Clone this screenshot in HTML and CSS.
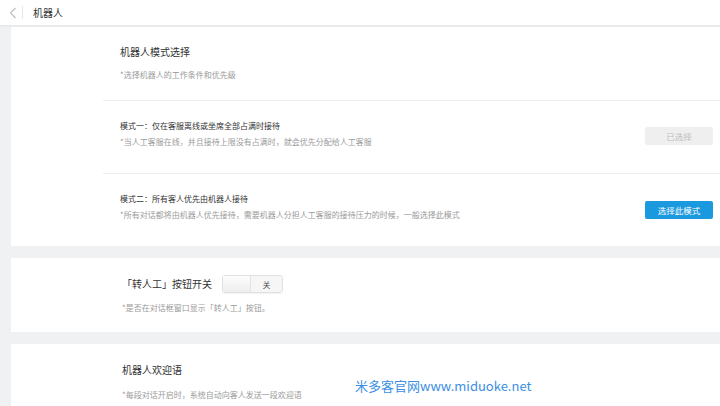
FILE: index.html
```html
<!DOCTYPE html>
<html lang="zh">
<head>
<meta charset="utf-8">
<link rel="stylesheet" href="styles.css">
</head>
<body>
<header class="topbar">
  <span class="back">
    <svg width="8" height="12" viewBox="0 0 8 12"><path d="M6.5 1 L1.5 6 L6.5 11" fill="none" stroke="#b8bcc2" stroke-width="1.1"/></svg>
  </span>
  <span class="sep"></span>
  <span class="page-title">机器人</span>
</header>
<main class="content">
  <section class="card card-mode">
    <div class="card-head">
      <h2 class="title">机器人模式选择</h2>
      <p class="hint">*选择机器人的工作条件和优先级</p>
    </div>
    <div class="mode-row">
      <div class="mode-text">
        <div class="mode-title">模式一：仅在客服离线或坐席全部占满时接待</div>
        <div class="hint">*当人工客服在线，并且接待上限没有占满时，就会优先分配给人工客服</div>
      </div>
      <button class="btn btn-disabled">已选择</button>
    </div>
    <div class="mode-row mode-row-2">
      <div class="mode-text">
        <div class="mode-title">模式二：所有客人优先由机器人接待</div>
        <div class="hint">*所有对话都将由机器人优先接待，需要机器人分担人工客服的接待压力的时候，一般选择此模式</div>
      </div>
      <button class="btn btn-primary">选择此模式</button>
    </div>
  </section>
  <section class="card card-switch">
    <div class="switch-line">
      <span class="title">「转人工」按钮开关</span>
      <span class="toggle"><span class="toggle-knob"></span><span class="toggle-label">关</span></span>
    </div>
    <p class="hint">*是否在对话框窗口显示「转人工」按钮。</p>
  </section>
  <section class="card card-welcome">
    <h2 class="title">机器人欢迎语</h2>
    <p class="hint">*每段对话开启时，系统自动向客人发送一段欢迎语</p>
  </section>
</main>
<div class="watermark">米多客官网www.miduoke.net</div>
</body>
</html>
```
FILE: styles.css
```css
* { box-sizing: border-box; }
html, body { margin: 0; padding: 0; }
body {
  width: 720px;
  height: 406px;
  overflow: hidden;
  background: #f0f1f3;
  font-family: "Noto Sans CJK SC", "Liberation Sans", sans-serif;
  color: #333;
  position: relative;
}
.topbar {
  height: 25px;
  background: #fff;
  display: flex;
  align-items: center;
  box-shadow: 0 1px 2px rgba(0,0,0,0.06);
  position: relative;
  z-index: 1;
}
.back { width: 22px; display: flex; justify-content: center; padding-left: 3px; }
.sep { width: 1px; height: 13px; background: #e6e7ea; }
.page-title { font-size: 10px; color: #333; margin-left: 10px; }
.content {
  padding: 2px 0 0 11px;
  display: flex;
  flex-direction: column;
  gap: 12px;
}
.card { background: #fff; }
.title { margin: 0; font-size: 10px; font-weight: normal; color: #333; line-height: 14px; }
.hint { margin: 0; font-size: 8px; color: #9a9a9a; line-height: 12px; white-space: nowrap; }
.card-mode { height: 219px; padding-left: 92px; }
.card-head { padding: 18px 0 0 17px; height: 74px; border-bottom: 1px solid #eceef0; }
.card-head .hint { margin-top: 10px; }
.mode-row {
  height: 73px;
  border-bottom: 1px solid #eceef0;
  display: flex;
  align-items: flex-start;
  justify-content: space-between;
  padding: 19px 7px 0 17px;
}
.mode-row-2 { border-bottom: none; padding-top: 19px; }
.mode-title { font-size: 8px; color: #333; line-height: 12px; margin-bottom: 4px; }
.btn {
  width: 68px;
  height: 18px;
  border: none;
  border-radius: 2px;
  font-family: inherit;
  font-size: 8.5px;
  padding: 0;
  margin-top: 7px;
}
.mode-row-2 .btn { margin-top: 8px; }
.btn-disabled { background: #efefef; color: #bdbdbd; }
.btn-primary { background: #1a99de; color: #fff; }
.card-switch { height: 74px; padding: 17px 0 0 111px; }
.switch-line { display: flex; align-items: center; gap: 10px; }
.toggle {
  width: 61px;
  height: 18px;
  border: 1px solid #e0e0e0;
  border-radius: 3px;
  display: flex;
  overflow: hidden;
  box-shadow: 0 1px 1px rgba(0,0,0,0.05);
}
.toggle-knob { width: 28px; background: linear-gradient(#fdfdfd, #eeeeee); border-right: 1px solid #e3e3e3; }
.toggle-label { flex: 1; background: #f6f6f6; font-size: 7.5px; display: flex; align-items: center; justify-content: center; color: #444; }
.card-switch .hint { margin-top: 9px; }
.card-welcome { height: 70px; padding: 19px 0 0 111px; }
.card-welcome .hint { margin-top: 12px; }
.watermark {
  position: absolute;
  left: 355px;
  top: 377px;
  font-family: "Noto Sans CJK SC", "Liberation Sans", sans-serif;
  font-size: 13px;
  color: #3b8fe4;
  line-height: 18px;
}
```
